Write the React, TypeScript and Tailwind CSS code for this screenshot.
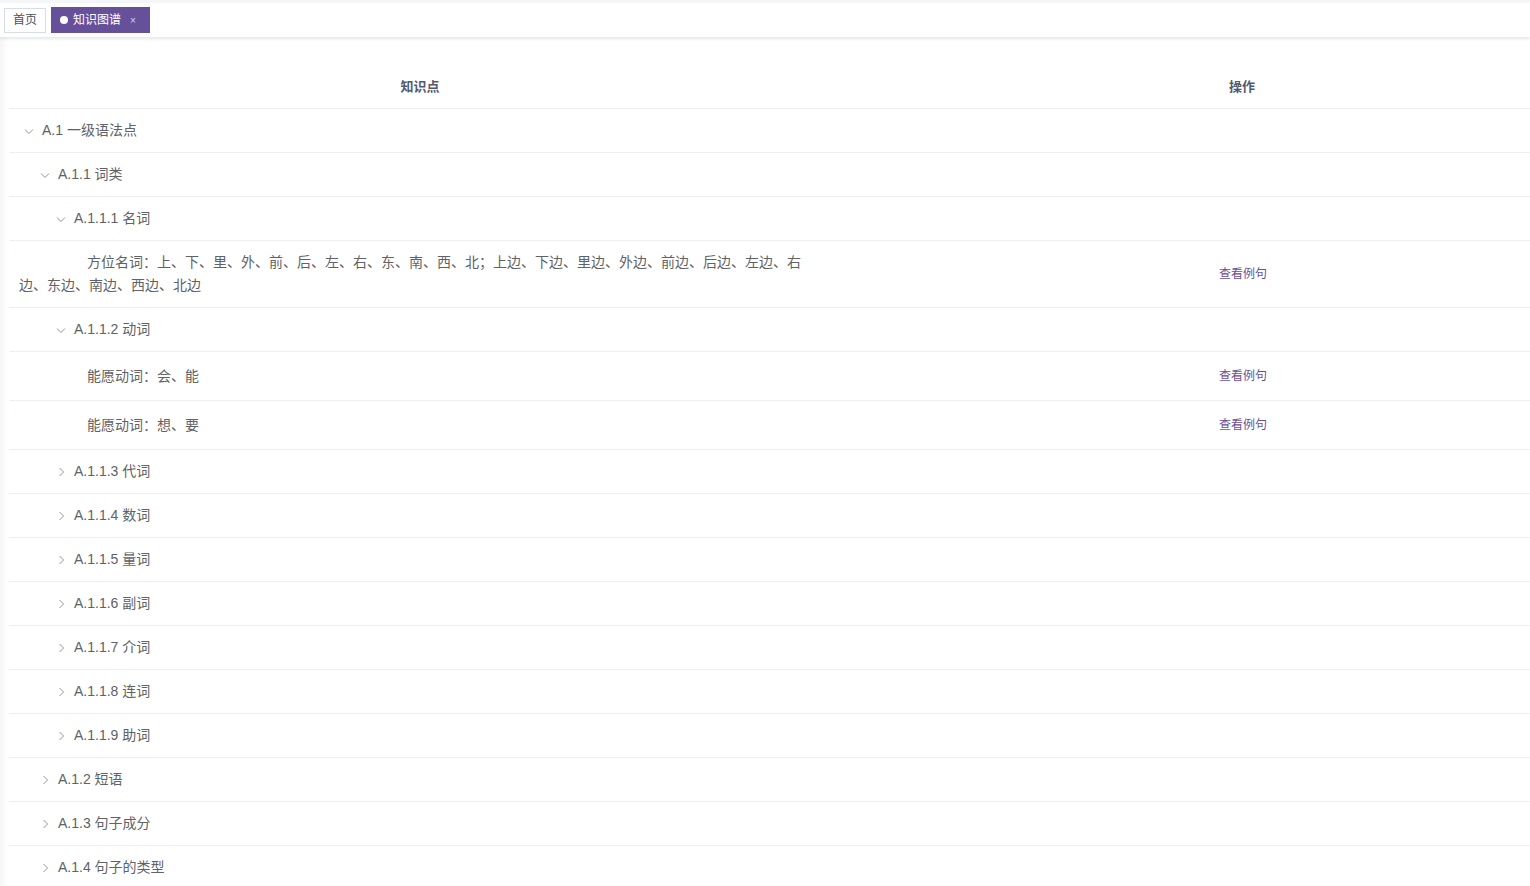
import type { ReactNode } from 'react'

type Row = {
  id: string
  label: string
  level: number
  expand?: 'open' | 'closed'
  action?: boolean
}

const rows: Row[] = [
  { id: 'a1', label: 'A.1 一级语法点', level: 0, expand: 'open' },
  { id: 'a11', label: 'A.1.1 词类', level: 1, expand: 'open' },
  { id: 'a111', label: 'A.1.1.1 名词', level: 2, expand: 'open' },
  {
    id: 'a111-1',
    label:
      '方位名词：上、下、里、外、前、后、左、右、东、南、西、北；上边、下边、里边、外边、前边、后边、左边、右边、东边、南边、西边、北边',
    level: 3,
    action: true,
  },
  { id: 'a112', label: 'A.1.1.2 动词', level: 2, expand: 'open' },
  { id: 'a112-1', label: '能愿动词：会、能', level: 3, action: true },
  { id: 'a112-2', label: '能愿动词：想、要', level: 3, action: true },
  { id: 'a113', label: 'A.1.1.3 代词', level: 2, expand: 'closed' },
  { id: 'a114', label: 'A.1.1.4 数词', level: 2, expand: 'closed' },
  { id: 'a115', label: 'A.1.1.5 量词', level: 2, expand: 'closed' },
  { id: 'a116', label: 'A.1.1.6 副词', level: 2, expand: 'closed' },
  { id: 'a117', label: 'A.1.1.7 介词', level: 2, expand: 'closed' },
  { id: 'a118', label: 'A.1.1.8 连词', level: 2, expand: 'closed' },
  { id: 'a119', label: 'A.1.1.9 助词', level: 2, expand: 'closed' },
  { id: 'a12', label: 'A.1.2 短语', level: 1, expand: 'closed' },
  { id: 'a13', label: 'A.1.3 句子成分', level: 1, expand: 'closed' },
  { id: 'a14', label: 'A.1.4 句子的类型', level: 1, expand: 'closed' },
]

const indents = ['w-0', 'w-[16px]', 'w-[32px]', 'w-[48px]']

function Chevron({ open }: { open: boolean }) {
  return (
    <svg width="12" height="12" viewBox="0 0 12 12" className={open ? 'rotate-90' : ''}>
      <path d="M4.5 2 L8.5 6 L4.5 10" fill="none" stroke="#8c93a3" strokeWidth="1" />
    </svg>
  )
}

function ExpandIcon({ row }: { row: Row }) {
  if (!row.expand) return <span className="inline-block w-[20px]" />
  return (
    <span className="inline-flex w-[20px] h-[23px] mr-[3px] items-center justify-center align-top">
      <Chevron open={row.expand === 'open'} />
    </span>
  )
}

function Cell({ children, className = '' }: { children: ReactNode; className?: string }) {
  return (
    <td className={`border-b border-[#ebeef5] px-[10px] py-[10px] align-middle ${className}`}>
      {children}
    </td>
  )
}

function Tabs() {
  return (
    <div className="bg-[#f5f6f7] pt-[3px]">
      <div className="h-[34px] bg-white flex items-center gap-[5px] px-[4px] shadow-[0_2px_3px_rgba(0,21,41,0.1)] relative z-10">
        <div className="h-[25px] px-[8px] border border-[#d8dce5] flex items-center text-[12px] text-[#495060]">
          首页
        </div>
        <div className="h-[26px] pl-[9px] pr-[14px] bg-[#67509a] flex items-center text-[12px] text-white">
          <span className="w-[8px] h-[8px] rounded-full bg-white mr-[5px]" />
          知识图谱
          <span className="ml-[9px] text-[10px] text-[#d8d0ea]">×</span>
        </div>
      </div>
    </div>
  )
}

export default function App() {
  return (
    <div className="w-[1530px] h-[886px] overflow-hidden bg-white font-['Liberation_Sans','Noto_Sans_CJK_SC',sans-serif]">
      <Tabs />
      <div className="relative pl-[9px] pt-[28px] shadow-[inset_8px_0_8px_-6px_rgba(0,0,0,0.06)]">
        <table className="w-[1644px] table-fixed border-collapse text-[14px] leading-[23px] text-[#606266]">
          <colgroup>
            <col className="w-[822px]" />
            <col className="w-[822px]" />
          </colgroup>
          <thead>
            <tr>
              <th className="border-b border-[#ebeef5] py-[10px] text-[13px] font-bold text-[#515a6e] text-center">
                知识点
              </th>
              <th className="border-b border-[#ebeef5] py-[10px] text-[13px] font-bold text-[#515a6e] text-center">
                操作
              </th>
            </tr>
          </thead>
          <tbody>
            {rows.map((row) => (
              <tr key={row.id}>
                <Cell>
                  <span className={`inline-block ${indents[row.level]}`} />
                  <ExpandIcon row={row} />
                  {row.label}
                </Cell>
                <Cell className="text-center">
                  {row.action && (
                    <button className="h-[28px] pl-[2px] text-[12px] text-[#67509a] align-middle">
                      查看例句
                    </button>
                  )}
                </Cell>
              </tr>
            ))}
          </tbody>
        </table>
      </div>
    </div>
  )
}
